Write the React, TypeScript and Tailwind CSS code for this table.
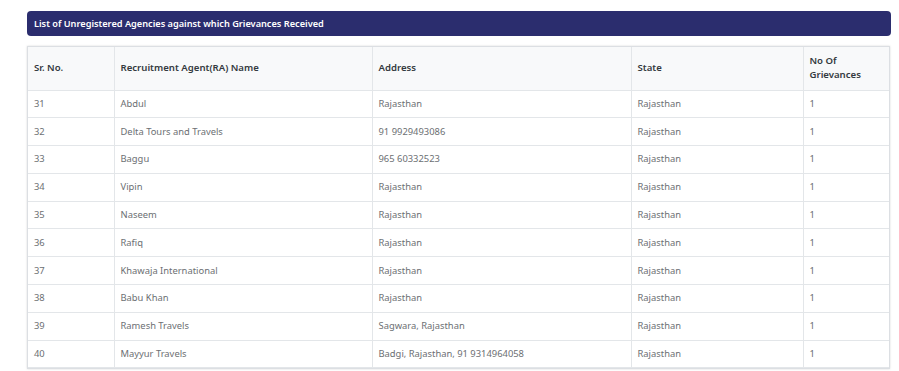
import React from "react";

const rows: [string, string, string, string, string][] = [
  ["31", "Abdul", "Rajasthan", "Rajasthan", "1"],
  ["32", "Delta Tours and Travels", "91 9929493086", "Rajasthan", "1"],
  ["33", "Baggu", "965 60332523", "Rajasthan", "1"],
  ["34", "Vipin", "Rajasthan", "Rajasthan", "1"],
  ["35", "Naseem", "Rajasthan", "Rajasthan", "1"],
  ["36", "Rafiq", "Rajasthan", "Rajasthan", "1"],
  ["37", "Khawaja International", "Rajasthan", "Rajasthan", "1"],
  ["38", "Babu Khan", "Rajasthan", "Rajasthan", "1"],
  ["39", "Ramesh Travels", "Sagwara, Rajasthan", "Rajasthan", "1"],
  ["40", "Mayyur Travels", "Badgi, Rajasthan, 91 9314964058", "Rajasthan", "1"],
];

export default function App() {
  return (
    <div
      className="w-[899px] h-[371px] overflow-hidden bg-white pt-[11px] pl-[27px] pr-[8px]"
      style={{ fontFamily: '"Noto Sans", "Open Sans", sans-serif' }}
    >
      <div className="h-[25px] w-[864px] rounded-[4px] bg-[#2b2d6e] flex items-center pl-[7px] text-[9.2px] font-semibold text-white">
        List of Unregistered Agencies against which Grievances Received
      </div>
      <div className="mt-[10px] w-[863px] border border-[#dcdfe3] shadow-[0_0_2px_rgba(0,0,0,0.15)]">
        <table className="w-full table-fixed border-collapse text-[9.4px]">
          <colgroup>
            <col className="w-[86px]" />
            <col className="w-[258px]" />
            <col className="w-[259px]" />
            <col className="w-[172px]" />
            <col />
          </colgroup>
          <thead>
            <tr className="h-[43px] bg-[#f8f9fa] text-[#343a40] text-[9.6px]">
              <th className="text-left font-semibold px-[6px] border-r border-b border-[#e3e6e9]">Sr. No.</th>
              <th className="text-left font-semibold px-[6px] border-r border-b border-[#e3e6e9]">Recruitment Agent(RA) Name</th>
              <th className="text-left font-semibold px-[6px] border-r border-b border-[#e3e6e9]">Address</th>
              <th className="text-left font-semibold px-[6px] border-r border-b border-[#e3e6e9]">State</th>
              <th className="text-left font-semibold px-[6px] border-b border-[#e3e6e9] leading-[14px]">
                No Of
                <br />
                Grievances
              </th>
            </tr>
          </thead>
          <tbody className="text-[#6c6f73]">
            {rows.map((r) => (
              <tr key={r[0]} className="h-[27.8px]">
                {r.map((c, i) => (
                  <td
                    key={i}
                    className={
                      "px-[6px] border-b border-[#e3e6e9] whitespace-nowrap" +
                      (i < 4 ? " border-r" : "")
                    }
                  >
                    {c}
                  </td>
                ))}
              </tr>
            ))}
          </tbody>
        </table>
      </div>
    </div>
  );
}
